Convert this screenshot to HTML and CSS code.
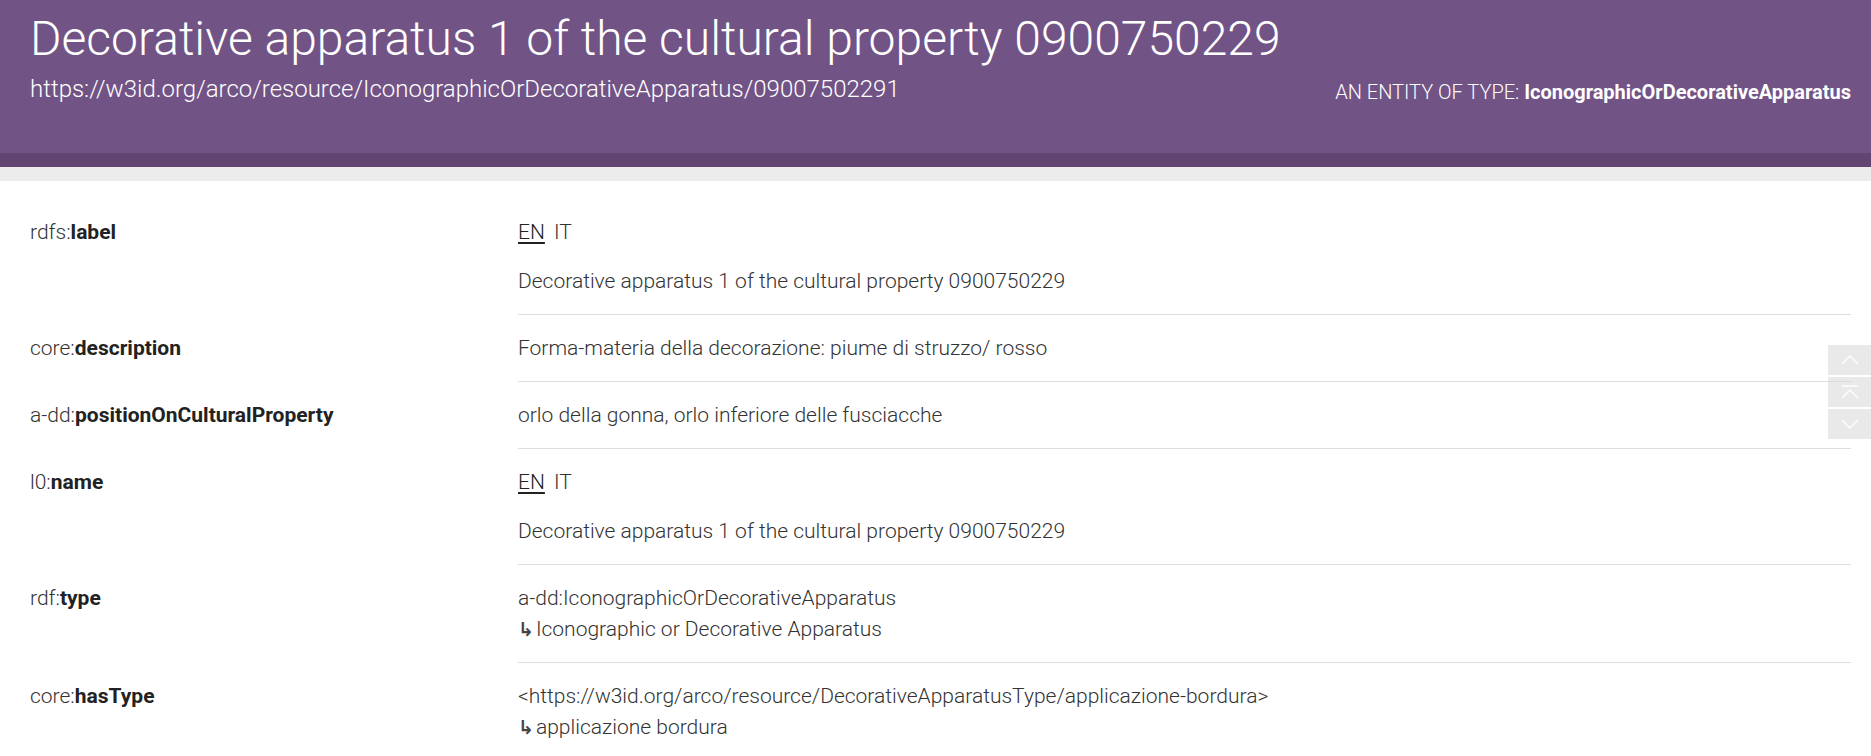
FILE: index.html
```html
<!DOCTYPE html>
<html lang="en">
<head>
<meta charset="utf-8">
<title>Decorative apparatus 1 of the cultural property 0900750229</title>
<link rel="stylesheet" href="styles.css">
</head>
<body>
<header class="header">
  <h1 class="title">Decorative apparatus 1 of the cultural property 0900750229</h1>
  <div class="subline">
    <div class="uri">https://w3id.org/arco/resource/IconographicOrDecorativeApparatus/09007502291</div>
    <div class="etype">AN ENTITY OF TYPE: <b>IconographicOrDecorativeApparatus</b></div>
  </div>
</header>
<div class="graybar"></div>
<main class="props">
  <div class="row">
    <div class="key">rdfs:<b>label</b></div>
    <div class="val">
      <div class="langs"><span class="lang active">EN</span><span class="lang">IT</span></div>
      <div class="text spaced">Decorative apparatus 1 of the cultural property 0900750229</div>
    </div>
  </div>
  <div class="row">
    <div class="key">core:<b>description</b></div>
    <div class="val"><div class="text">Forma-materia della decorazione: piume di struzzo/ rosso</div></div>
  </div>
  <div class="row">
    <div class="key">a-dd:<b>positionOnCulturalProperty</b></div>
    <div class="val"><div class="text">orlo della gonna, orlo inferiore delle fusciacche</div></div>
  </div>
  <div class="row">
    <div class="key">l0:<b>name</b></div>
    <div class="val">
      <div class="langs"><span class="lang active">EN</span><span class="lang">IT</span></div>
      <div class="text spaced">Decorative apparatus 1 of the cultural property 0900750229</div>
    </div>
  </div>
  <div class="row">
    <div class="key">rdf:<b>type</b></div>
    <div class="val">
      <div class="text">a-dd:IconographicOrDecorativeApparatus</div>
      <div class="text"><span class="arrow">↳</span>Iconographic or Decorative Apparatus</div>
    </div>
  </div>
  <div class="row">
    <div class="key">core:<b>hasType</b></div>
    <div class="val">
      <div class="text">&lt;https://w3id.org/arco/resource/DecorativeApparatusType/applicazione-bordura&gt;</div>
      <div class="text"><span class="arrow">↳</span>applicazione bordura</div>
    </div>
  </div>
</main>
<nav class="scroller">
  <div class="sbtn"><svg width="18" height="10" viewBox="0 0 18 10"><path d="M1 9 L9 1 L17 9" fill="none" stroke="#fff" stroke-width="1.4"/></svg></div>
  <div class="sbtn"><svg width="18" height="14" viewBox="0 0 18 14"><path d="M1 1 H17 M1 13 L9 5 L17 13" fill="none" stroke="#fff" stroke-width="1.4"/></svg></div>
  <div class="sbtn"><svg width="18" height="10" viewBox="0 0 18 10"><path d="M1 1 L9 9 L17 1" fill="none" stroke="#fff" stroke-width="1.4"/></svg></div>
</nav>
</body>
</html>
```

FILE: styles.css
```css
* { box-sizing: border-box; }

html, body {
  margin: 0;
  padding: 0;
  background: #fff;
  font-family: Roboto, "Liberation Sans", sans-serif;
}

.header {
  background: #715386;
  color: #fff;
  padding: 10px 20px 48px 30px;
  border-bottom: 14px solid #614570;
}

.title {
  margin: 0;
  font-size: 48px;
  font-weight: 300;
  line-height: 57px;
  letter-spacing: 0;
}

.subline {
  display: flex;
  justify-content: space-between;
  align-items: baseline;
  margin-top: 7px;
}

.uri {
  font-size: 24px;
  font-weight: 300;
  line-height: 30px;
}

.etype {
  font-size: 20px;
  font-weight: 300;
  line-height: 30px;
  position: relative;
  top: 2px;
}

.etype b {
  font-weight: 700;
}

.graybar {
  height: 14px;
  background: #ececec;
}

.props {
  padding: 18px 20px 0 30px;
}

.row {
  display: grid;
  grid-template-columns: 488px 1fr;
}

.key {
  padding-top: 18px;
  font-size: 21px;
  line-height: 31px;
  font-weight: 300;
  color: #333;
}

.key b {
  font-weight: 700;
  color: #222;
}

.val {
  padding: 18px 0 17px;
  border-bottom: 1px solid #dedede;
  color: #333;
}

.text {
  font-size: 21px;
  font-weight: 300;
  line-height: 31px;
}

.text.spaced {
  margin-top: 18px;
}

.langs {
  display: flex;
  gap: 9px;
  font-size: 21px;
  font-weight: 300;
  line-height: 31px;
  color: #333;
}

.lang.active {
  color: #222;
  text-decoration: underline;
  text-decoration-thickness: 2px;
  text-underline-offset: 3px;
}

.arrow {
  font-family: "DejaVu Sans", sans-serif;
  font-size: 19px;
  font-weight: 700;
  margin-right: 2px;
  color: #444;
}

.scroller {
  position: fixed;
  right: 0;
  top: 345px;
  display: flex;
  flex-direction: column;
  gap: 2px;
}

.sbtn {
  width: 43px;
  height: 30px;
  background: rgba(215, 215, 215, 0.55);
  display: flex;
  align-items: center;
  justify-content: center;
}
```
